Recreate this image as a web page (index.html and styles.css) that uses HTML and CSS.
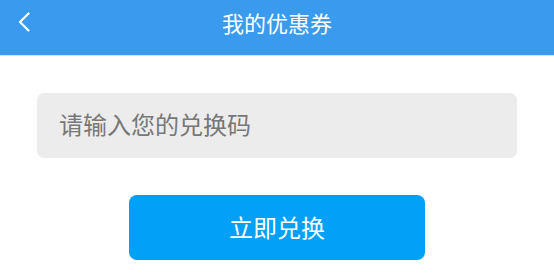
FILE: index.html
```html
<!DOCTYPE html>
<html lang="zh-CN">
<head>
<meta charset="utf-8">
<title>我的优惠券</title>
<link rel="stylesheet" href="styles.css">
</head>
<body>
<header class="topbar">
  <span class="back">
    <svg width="12" height="20" viewBox="0 0 12 20"><path d="M10.5 1.5 L2 10 L10.5 18.5" fill="none" stroke="#fff" stroke-width="2.2" stroke-linecap="round" stroke-linejoin="round"/></svg>
  </span>
  <h1 class="title">我的优惠券</h1>
</header>
<main class="content">
  <div class="code-input"><span class="placeholder">请输入您的兑换码</span></div>
  <button class="redeem">立即兑换</button>
</main>
</body>
</html>
```
FILE: styles.css
```css
* { box-sizing: border-box; }
html, body { margin: 0; padding: 0; background: #fff; }
body { font-family: "Noto Sans CJK SC", "Noto Sans", sans-serif; width: 554px; height: 273px; overflow: hidden; }
.topbar {
  position: relative;
  height: 56px;
  background: #3a9aee;
  border-bottom: 1px solid #cfe5fa;
  display: flex;
  align-items: center;
  justify-content: center;
}
.back {
  position: absolute;
  left: 18px;
  top: 12px;
  width: 12px;
  height: 20px;
  display: block;
}
.back svg { display: block; }
.title {
  margin: 0 0 11px;
  font-size: 22px;
  font-weight: 400;
  color: #fff;
  line-height: 1;
}
.content {
  display: flex;
  flex-direction: column;
  align-items: center;
  padding-top: 37px;
  gap: 37px;
}
.code-input {
  width: 480px;
  height: 65px;
  background: #ececec;
  border-radius: 7px;
  display: flex;
  align-items: center;
  padding: 0 0 4px 22px;
}
.placeholder {
  font-size: 24px;
  color: #777;
  line-height: 1;
}
.redeem {
  width: 296px;
  height: 65px;
  border: 0;
  border-radius: 8px;
  background: #03a0f7;
  color: #fff;
  font-family: inherit;
  font-size: 24px;
  line-height: 1;
  padding: 0 0 2px;
}
```
